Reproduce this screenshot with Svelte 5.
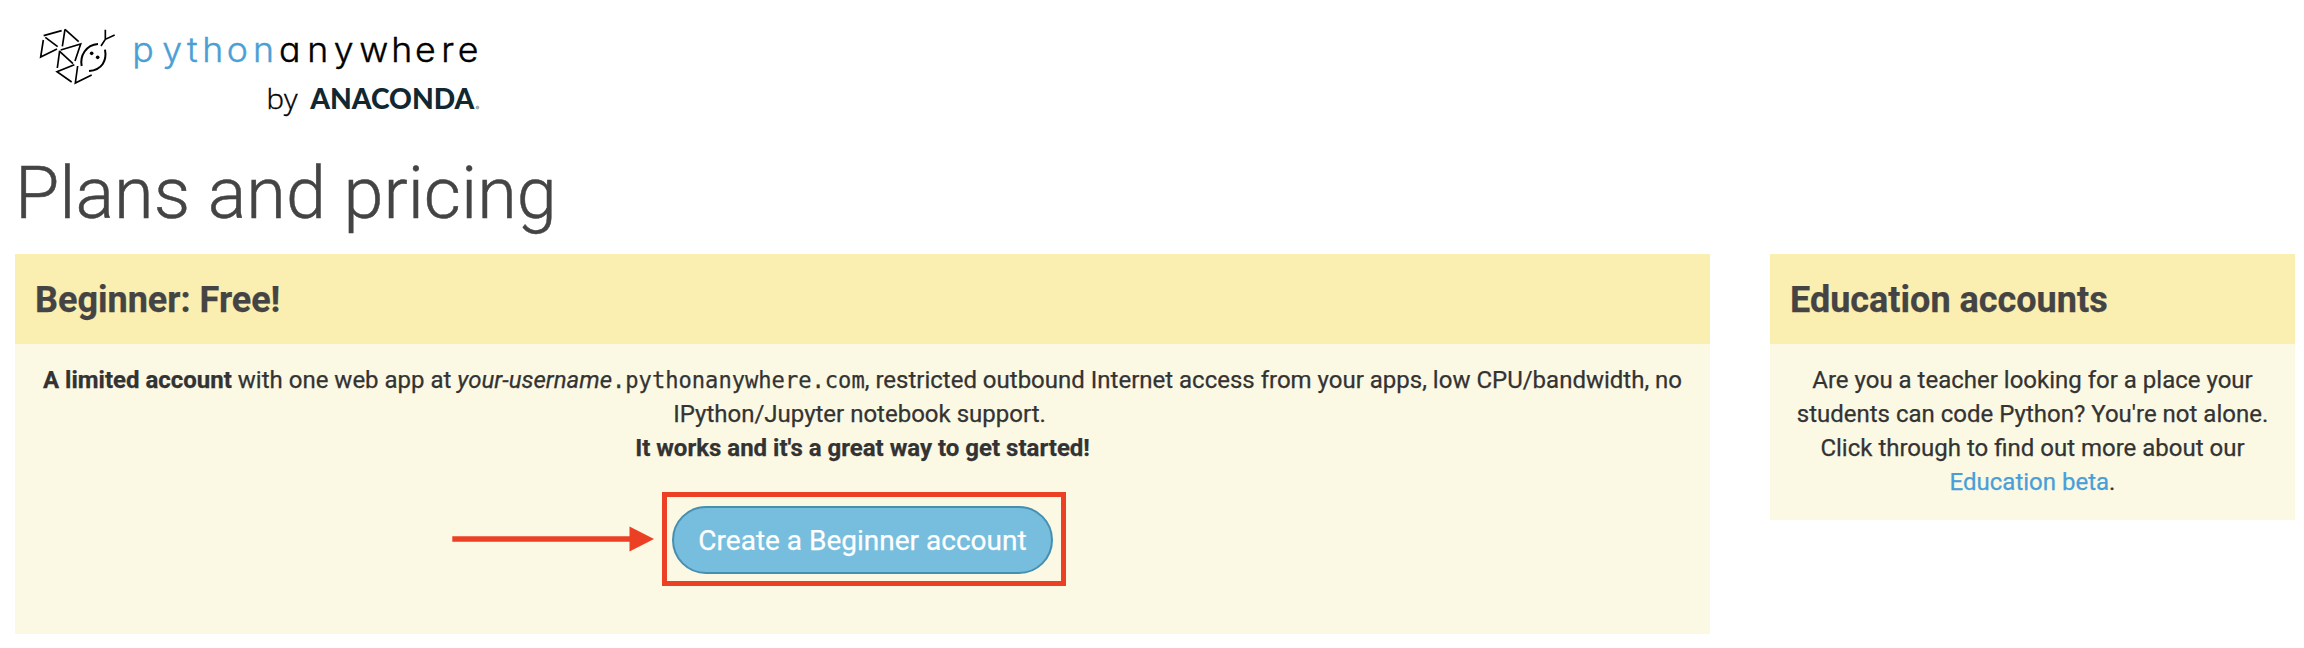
<script>
  const triangles = [
    'M71 77L125 62', 'M76 82L113 110', 'M70 90L62 141L111 117',
    'M135 58L127 109', 'M135 58L176 95', 'M122 120L182 102L165 153',
    'M119 122L112 174', 'M119 124L159 161', 'M163 164L111 185L155 216',
    'M173 168L166 219L215 195'
  ];
</script>

<div class="page">
  <header>
    <svg class="logo" width="480" height="120" viewBox="0 0 480 120" role="img" aria-label="pythonanywhere by Anaconda">
      <g transform="scale(.33333)" fill="none" stroke="#000" stroke-width="5">
        {#each triangles as d}<path {d} />{/each}
        <path stroke-width="6" d="M185 168C179 137 198 105 234 102M255 119C261 151 247 180 207 183" />
        <path d="M243 108L256 88L284 75M256 59V89" />
        <circle cx="215" cy="130" r="5.5" fill="#000" stroke="none" />
        <circle cx="233" cy="142" r="5.5" fill="#000" stroke="none" />
      </g>
      <g transform="scale(1.05 1)">
        <text class="word blue" y="52.5" x="106.9 135.5 159 173.5 196.9 221.8">python</text>
        <text class="word" y="52.5" x="246.7 273.5 298.9 323.2 353.5 376.2 401.1 416.9">anywhere</text>
      </g>
      <text class="by" x="246.5" y="98.7" textLength="31" lengthAdjust="spacingAndGlyphs">by</text>
      <text class="anaconda" x="290.3" y="98.7" textLength="164" lengthAdjust="spacingAndGlyphs">ANACONDA</text>
      <circle cx="457.5" cy="97.5" r="1.3" fill="#b5bcbf" stroke="#7e898d" stroke-width=".8" />
    </svg>
  </header>
  <h1>Plans and pricing</h1>
  <main>
    <section class="plan">
      <h3>Beginner: Free!</h3>
      <div class="content">
        <p><strong>A limited account</strong> with one web app at <em>your-username</em><code>.pythonanywhere.com</code>, restricted outbound Internet access from your apps, low CPU/bandwidth, no<br />IPython/Jupyter notebook support.&nbsp;<br /><strong>It works and it's a great way to get started!</strong></p>
        <div class="action">
          <button>Create a Beginner account</button>
          <div class="frame"></div>
          <svg class="arrow" width="203" height="26" viewBox="0 0 203 26" aria-hidden="true">
            <path d="M.3 13H180" stroke="#ec4024" stroke-width="5.4" />
            <path d="M177.5 .5L202 13L177.5 25.5Z" fill="#ec4024" />
          </svg>
        </div>
      </div>
    </section>
    <section class="education">
      <h3>Education accounts</h3>
      <div class="content">
        <p>Are you a teacher looking for a place your<br />students can code Python? You're not alone.<br />Click through to find out more about our<br /><a href="#education">Education beta</a>.</p>
      </div>
    </section>
  </main>
</div>

<style>
  :global(body) { margin: 0; background: #fff; }
  .page { box-sizing: border-box; width: 2304px; height: 648px; padding: 10px 9px 0 15px; overflow: hidden; font-family: Roboto, sans-serif; font-size: 24px; line-height: 34px; color: #333; -webkit-text-stroke: .25px currentColor; }
  header { height: 120px; padding-left: 5px; }
  .logo { display: block; -webkit-text-stroke: 0; }
  .word { font: 300 34px Inter, sans-serif; font-feature-settings: "cv11"; fill: #000; stroke: #000; stroke-width: .4; }
  .blue { fill: #4b9fd5; stroke: #4b9fd5; }
  .by { font: 300 27px "Open Sans", sans-serif; fill: #000; stroke: #000; stroke-width: .4; }
  .anaconda { font: 900 28.5px Lato, sans-serif; fill: #112830; }
  h1 { margin: 24px 0 21px; height: 79px; line-height: 79px; font-size: 72px; font-weight: 300; color: #444; white-space: nowrap; -webkit-text-stroke-width: .5px; }
  main { display: grid; grid-template-columns: 1695px 525px; column-gap: 60px; align-items: start; }
  section { background: #fbf8e4; }
  .plan { height: 379.5px; }
  .education { height: 266px; }
  h3 { box-sizing: border-box; height: 90px; margin: 0; padding: 1px 20px 0; line-height: 90px; font-size: 36px; font-weight: 700; color: #444; background: #fbeeb1; }
  .content { padding-top: 19px; text-align: center; white-space: nowrap; }
  p { margin: 0; }
  strong { font-weight: 700; }
  code { font-family: "DejaVu Sans Mono", monospace; font-size: 22.1px; line-height: 1; }
  a { color: #489fd8; text-decoration: none; }
  .action { position: relative; width: 381px; height: 68px; margin: 41px auto 0; }
  button { display: block; width: 381px; height: 68px; padding: 0; border: 2px solid #468fb1; border-radius: 34px; background: #77bddd; color: #fff; font: 400 28px Roboto, sans-serif; -webkit-text-stroke: .25px #fff; }
  .frame { position: absolute; inset: -14px -13px -12px -10px; border: 5px solid #ec4024; }
  .arrow { position: absolute; left: -220px; top: 20px; }
</style>
